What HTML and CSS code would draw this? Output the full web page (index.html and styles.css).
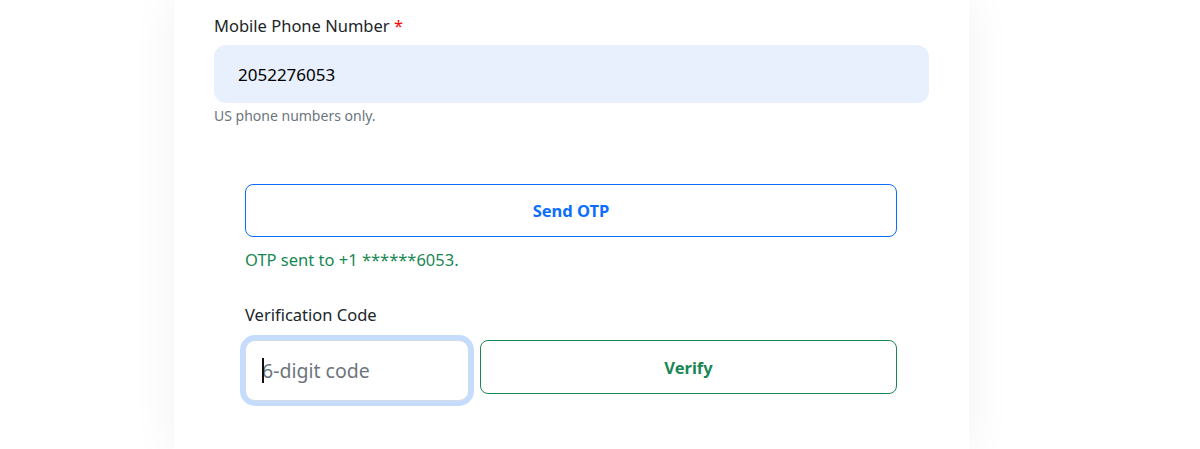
FILE: index.html
```html
<!DOCTYPE html>
<html lang="en">
<head>
<meta charset="utf-8">
<title>Verify Phone</title>
<link rel="stylesheet" href="styles.css">
</head>
<body>
<div class="page">
  <div class="card">
    <div class="field">
      <label class="label" for="phone">Mobile Phone Number <span class="req">*</span></label>
      <input class="phone-input" id="phone" type="tel" value="2052276053">
      <div class="help">US phone numbers only.</div>
    </div>
    <div class="otp">
      <button class="btn btn-blue" type="button">Send OTP</button>
      <div class="sent">OTP sent to +1 ******6053.</div>
      <label class="label code-label" for="code">Verification Code</label>
      <div class="code-row">
        <div class="code-wrap">
          <input class="code-input" id="code" type="text" placeholder="6-digit code">
          <span class="caret"></span>
        </div>
        <button class="btn btn-green" type="button">Verify</button>
      </div>
    </div>
  </div>
</div>
</body>
</html>
```
FILE: styles.css
```css
html, body {
  margin: 0;
  background: #ffffff;
}
body {
  font-family: "Noto Sans", "Open Sans", sans-serif;
  color: #212529;
}
.page {
  padding-left: 174px;
  height: 449px;
  overflow: hidden;
}
.card {
  width: 795px;
  min-height: 449px;
  box-sizing: border-box;
  padding: 13px 40px 0 40px;
  background: #fff;
  box-shadow: 0 0 45px rgba(0, 0, 0, 0.06);
}
.field {
  display: flex;
  flex-direction: column;
}
.label {
  display: block;
  font-size: 16.5px;
  line-height: 25px;
  margin-bottom: 7px;
  color: #212529;
}
.req {
  color: #ff0000;
}
.phone-input {
  height: 58px;
  box-sizing: border-box;
  border: none;
  border-radius: 12px;
  background: #e8f0fe;
  padding: 0 24px;
  font-family: inherit;
  font-size: 17px;
  color: #000;
  outline: none;
}
.help {
  margin-top: 2px;
  font-size: 14px;
  line-height: 21px;
  color: #6c757d;
}
.otp {
  margin-top: 58px;
  padding: 0 32px 0 31px;
}
.btn {
  display: block;
  box-sizing: border-box;
  background: #fff;
  border-radius: 8px;
  font-family: inherit;
  font-size: 16.5px;
  font-weight: 700;
  cursor: pointer;
}
.btn-blue {
  width: 100%;
  height: 53px;
  border: 1px solid #0d6efd;
  color: #0d6efd;
}
.sent {
  margin-top: 10px;
  font-size: 16.5px;
  line-height: 25px;
  color: #198754;
}
.code-label {
  margin-top: 30px;
  margin-bottom: 13px;
}
.code-row {
  display: flex;
  align-items: flex-start;
  gap: 11px;
}
.code-wrap {
  position: relative;
  width: 224px;
  flex: none;
  margin-top: 0;
}
.code-input {
  display: block;
  width: 100%;
  height: 61px;
  box-sizing: border-box;
  border: 1px solid #d3dbe6;
  border-radius: 10px;
  box-shadow: 0 0 0 5px rgba(13, 110, 253, 0.24);
  padding: 0 16px;
  font-family: inherit;
  font-size: 19.5px;
  color: #212529;
  outline: none;
  background: #fff;
}
.code-input::placeholder {
  color: #6c757d;
}
.caret {
  position: absolute;
  left: 17px;
  top: 18px;
  width: 2px;
  height: 25px;
  background: #111;
}
.btn-green {
  flex: 1;
  height: 54px;
  border: 1px solid #198754;
  color: #198754;
}
```
